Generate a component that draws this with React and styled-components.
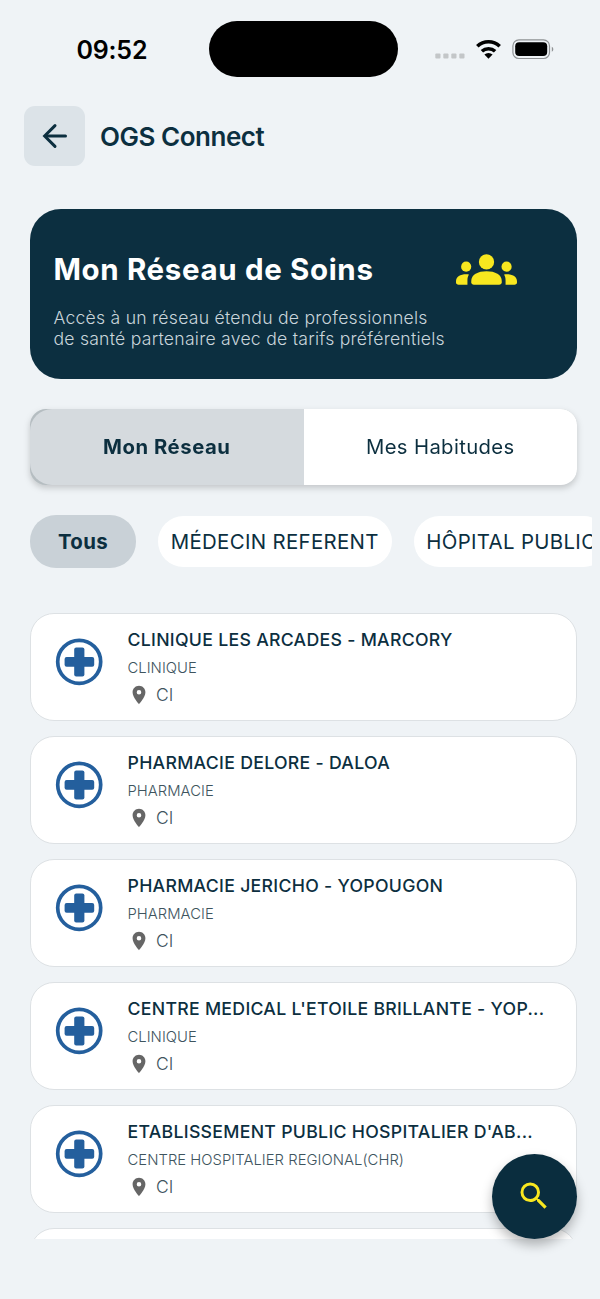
import React from 'react'
import styled, { createGlobalStyle } from 'styled-components'
import { MdLocationOn, MdSearch } from 'react-icons/md'

const GlobalStyle = createGlobalStyle`
  * {
    box-sizing: border-box;
  }

  body {
    margin: 0;
    background-color: #eff3f6;
    color: #0c2f3f;
    font-family: Inter, 'Liberation Sans', sans-serif;
  }

  p, h1, h2, h3 {
    margin: 0;
  }

  button {
    border: 0;
    padding: 0;
    color: inherit;
    font-family: inherit;
  }
`

const Screen = styled.div`
  position: relative;
  display: flex;
  flex-direction: column;
  width: 600px;
  height: 1299px;
  overflow: hidden;
`

const StatusBar = styled.div`
  display: grid;
  grid-template-columns: 209px 189px 1fr;
  align-items: center;
  height: 98px;
  color: #000;
`

const Time = styled.span`
  padding: 2px 0 0 76.5px;
  font-size: 25px;
  font-weight: 600;
  letter-spacing: -0.2px;
  line-height: 30px;
`

const Island = styled.div`
  height: 55.5px;
  border-radius: 28px;
  background-color: #000;
`

const StatusIcons = styled.div`
  display: flex;
  align-items: center;
  padding-left: 37px;

  svg {
    display: block;
  }
`

const Header = styled.header`
  display: flex;
  align-items: center;
  gap: 15px;
  padding: 8px 24px 0;
`

const BackButton = styled.button`
  display: flex;
  align-items: center;
  justify-content: center;
  width: 61px;
  height: 60px;
  border-radius: 11px;
  background-color: #dce3e8;
`

const Title = styled.h1`
  padding-top: 2px;
  font-size: 26px;
  font-weight: 600;
  letter-spacing: -0.47px;
  line-height: 32px;
`

const Banner = styled.section`
  display: flex;
  align-items: flex-start;
  justify-content: space-between;
  height: 170.4px;
  margin: 42.6px 23px 0 30.4px;
  padding: 30px 60px 0 23px;
  border-radius: 31px;
  background-color: #0c2f40;
  color: #fff;
`

const BannerTitle = styled.h2`
  padding-top: 12px;
  font-size: 29.5px;
  font-weight: 700;
  letter-spacing: 0.65px;
  line-height: 36px;
`

const BannerText = styled.p`
  padding-top: 20px;
  color: #c9d5db;
  font-size: 17.6px;
  font-weight: 300;
  letter-spacing: 0.25px;
  line-height: 21px;
  white-space: nowrap;
`

const Tabs = styled.div`
  display: grid;
  grid-template-columns: 1fr 1fr;
  height: 76px;
  margin: 30px 23px 0 30px;
  overflow: hidden;
  border-radius: 16px;
  background-color: #b5bdc1;
`

const TabsShadow = styled.div`
  filter: drop-shadow(0 3px 3px rgba(0, 0, 0, 0.18));
`

const Tab = styled.button`
  background-color: ${({ $active }) => ($active ? '#d5dade' : '#fff')};
  border-radius: ${({ $active }) => ($active ? '22px 0 0 22px' : '0')};
  font-size: 20.3px;
  font-weight: ${({ $active }) => ($active ? 700 : 400)};
  letter-spacing: ${({ $active }) => ($active ? 0.55 : 0.35)}px;
`

const Filters = styled.div`
  display: flex;
  align-items: center;
  gap: 22px;
  width: 562px;
  height: 53px;
  margin: 30px 0 0 30px;
  overflow: hidden;
`

const Chip = styled.button`
  flex: none;
  height: ${({ $active }) => ($active ? 53 : 51)}px;
  padding: 1px ${({ $active }) => ($active ? 28 : 12.7)}px 0;
  border-radius: 26px;
  background-color: ${({ $active }) => ($active ? '#c9d1d7' : '#fff')};
  font-size: 20.4px;
  font-weight: ${({ $active }) => ($active ? 700 : 400)};
  letter-spacing: 0.34px;
  white-space: nowrap;
`

const List = styled.div`
  display: flex;
  flex-direction: column;
  gap: 15px;
  height: 626px;
  margin: 45px 23px 0 30px;
  overflow: hidden;
`

const Card = styled.article`
  display: flex;
  flex: none;
  gap: 24.5px;
  height: 108px;
  padding: 13px 24px 0;
  border: 1px solid #dde1e4;
  border-radius: 24px;
  background-color: #fff;
`

const CrossIcon = styled.svg`
  flex: none;
  width: 48px;
  height: 48px;
  margin-top: 11px;
`

const CardBody = styled.div`
  display: flex;
  flex-direction: column;
  min-width: 0;
  padding-top: 1px;
  white-space: nowrap;
`

const Name = styled.h3`
  font-size: 17.7px;
  font-weight: 480;
  letter-spacing: 0.29px;
  line-height: 24px;
`

const Kind = styled.p`
  margin-top: 6px;
  color: #3e545e;
  font-size: 14.8px;
  font-weight: 300;
  letter-spacing: 0.04px;
  line-height: 20px;
`

const Place = styled.div`
  display: flex;
  align-items: center;
  gap: 6.5px;
  margin-top: 5px;
  color: #3e545e;
  font-size: 17.5px;
  font-weight: 300;
  line-height: 24px;
`

const SearchButton = styled.button`
  position: absolute;
  right: 23px;
  bottom: 60px;
  display: flex;
  align-items: center;
  justify-content: center;
  width: 85px;
  height: 85px;
  padding: 0 1px 1px 0;
  border-radius: 50%;
  background-color: #0a2d3e;
  box-shadow: 0 6px 12px rgba(0, 0, 0, 0.28);
`

const providers = [
  { name: 'CLINIQUE LES ARCADES - MARCORY', kind: 'CLINIQUE' },
  { name: 'PHARMACIE DELORE - DALOA', kind: 'PHARMACIE' },
  { name: 'PHARMACIE JERICHO - YOPOUGON', kind: 'PHARMACIE' },
  { name: "CENTRE MEDICAL L'ETOILE BRILLANTE - YOP...", kind: 'CLINIQUE' },
  { name: "ETABLISSEMENT PUBLIC HOSPITALIER D'AB...", kind: 'CENTRE HOSPITALIER REGIONAL(CHR)' },
]

function DeviceStatus() {
  return (
    <StatusIcons>
      <svg width="120" height="30" viewBox="0 0 120 30">
        <g fill="#c3c6c8">
          <rect x="0.3" y="19.4" width="5.2" height="5" rx="1" />
          <rect x="8.3" y="19.4" width="5.2" height="5" rx="1" />
          <rect x="16.3" y="19.4" width="5.2" height="5" rx="1" />
          <rect x="24.3" y="19.4" width="5.2" height="5" rx="1" />
        </g>
        <g fill="none" stroke="#000" strokeWidth="3.6">
          <path d="M42.3 12.2a16.3 16.3 0 0 1 22.4 0" />
          <path d="M46.9 17.3a9.7 9.7 0 0 1 13.2 0" />
        </g>
        <path d="M53.5 24.8l-4.1-4.2a6 6 0 0 1 8.2 0z" />
        <rect x="77.9" y="5.9" width="36.6" height="18.6" rx="6" fill="none" stroke="#8f9294" strokeWidth="1.2" />
        <rect x="80.2" y="8.3" width="32" height="13.8" rx="4" />
        <path d="M116.8 12.8c2 .8 2 4.2 0 5z" fill="#8f9294" />
      </svg>
    </StatusIcons>
  )
}

function BackIcon() {
  return (
    <svg
      width="36"
      height="36"
      viewBox="0 0 24 24"
      fill="none"
      stroke="currentColor"
      strokeWidth="2"
      strokeLinecap="round"
    >
      <path d="M19 12H6" />
      <path d="M12 5.1L5.1 12l6.9 6.9" />
    </svg>
  )
}

function GroupIcon() {
  return (
    <svg width="61" height="61" viewBox="0 0 24 24" fill="#f8e71f">
      <circle cx="4" cy="10.9" r="2" />
      <circle cx="12" cy="9" r="3" />
      <circle cx="19.9" cy="10.9" r="2" />
      <path d="M0 16.7C0 14.9 1.7 13.9 4 13.9c.4 0 .75.03 1.08.1-.4.7-.58 1.5-.58 2.3V18H1c-.55 0-1-.4-1-.9z" />
      <path d="M24 16.7c0-1.8-1.7-2.8-4-2.8-.4 0-.75.03-1.08.1.4.7.58 1.5.58 2.3V18H23c.55 0 1-.4 1-.9z" />
      <path d="M6 16.5c0-2.5 2.6-3.8 6-3.8s6 1.3 6 3.8v.5c0 .55-.45 1-1 1H7c-.55 0-1-.45-1-1z" />
    </svg>
  )
}

function ProviderCard({ name, kind }) {
  return (
    <Card>
      <CrossIcon viewBox="0 0 48 48" fill="#245f9d">
        <circle cx="24.2" cy="23.8" r="21.5" fill="none" stroke="#245f9d" strokeWidth="3.7" />
        <rect x="19.2" y="9.4" width="10.2" height="29" rx="2" />
        <rect x="9.6" y="18.9" width="29.6" height="9.8" rx="2" />
      </CrossIcon>
      <CardBody>
        <Name>{name}</Name>
        <Kind>{kind}</Kind>
        <Place>
          <MdLocationOn size={22} color="#666" />
          CI
        </Place>
      </CardBody>
    </Card>
  )
}

function App() {
  return (
    <Screen>
      <GlobalStyle />
      <StatusBar>
        <Time>09:52</Time>
        <Island />
        <DeviceStatus />
      </StatusBar>
      <Header>
        <BackButton aria-label="Retour">
          <BackIcon />
        </BackButton>
        <Title>OGS Connect</Title>
      </Header>
      <Banner>
        <div>
          <BannerTitle>Mon Réseau de Soins</BannerTitle>
          <BannerText>
            Accès à un réseau étendu de professionnels
            <br />
            de santé partenaire avec de tarifs préférentiels
          </BannerText>
        </div>
        <GroupIcon />
      </Banner>
      <TabsShadow>
        <Tabs>
          <Tab $active>Mon Réseau</Tab>
          <Tab>Mes Habitudes</Tab>
        </Tabs>
      </TabsShadow>
      <Filters>
        <Chip $active>Tous</Chip>
        <Chip>MÉDECIN REFERENT</Chip>
        <Chip>HÔPITAL PUBLIC</Chip>
      </Filters>
      <List>
        {providers.map((provider) => (
          <ProviderCard key={provider.name} {...provider} />
        ))}
        <Card />
      </List>
      <SearchButton aria-label="Rechercher">
        <MdSearch size={36} color="#f8e71f" />
      </SearchButton>
    </Screen>
  )
}

export default App
